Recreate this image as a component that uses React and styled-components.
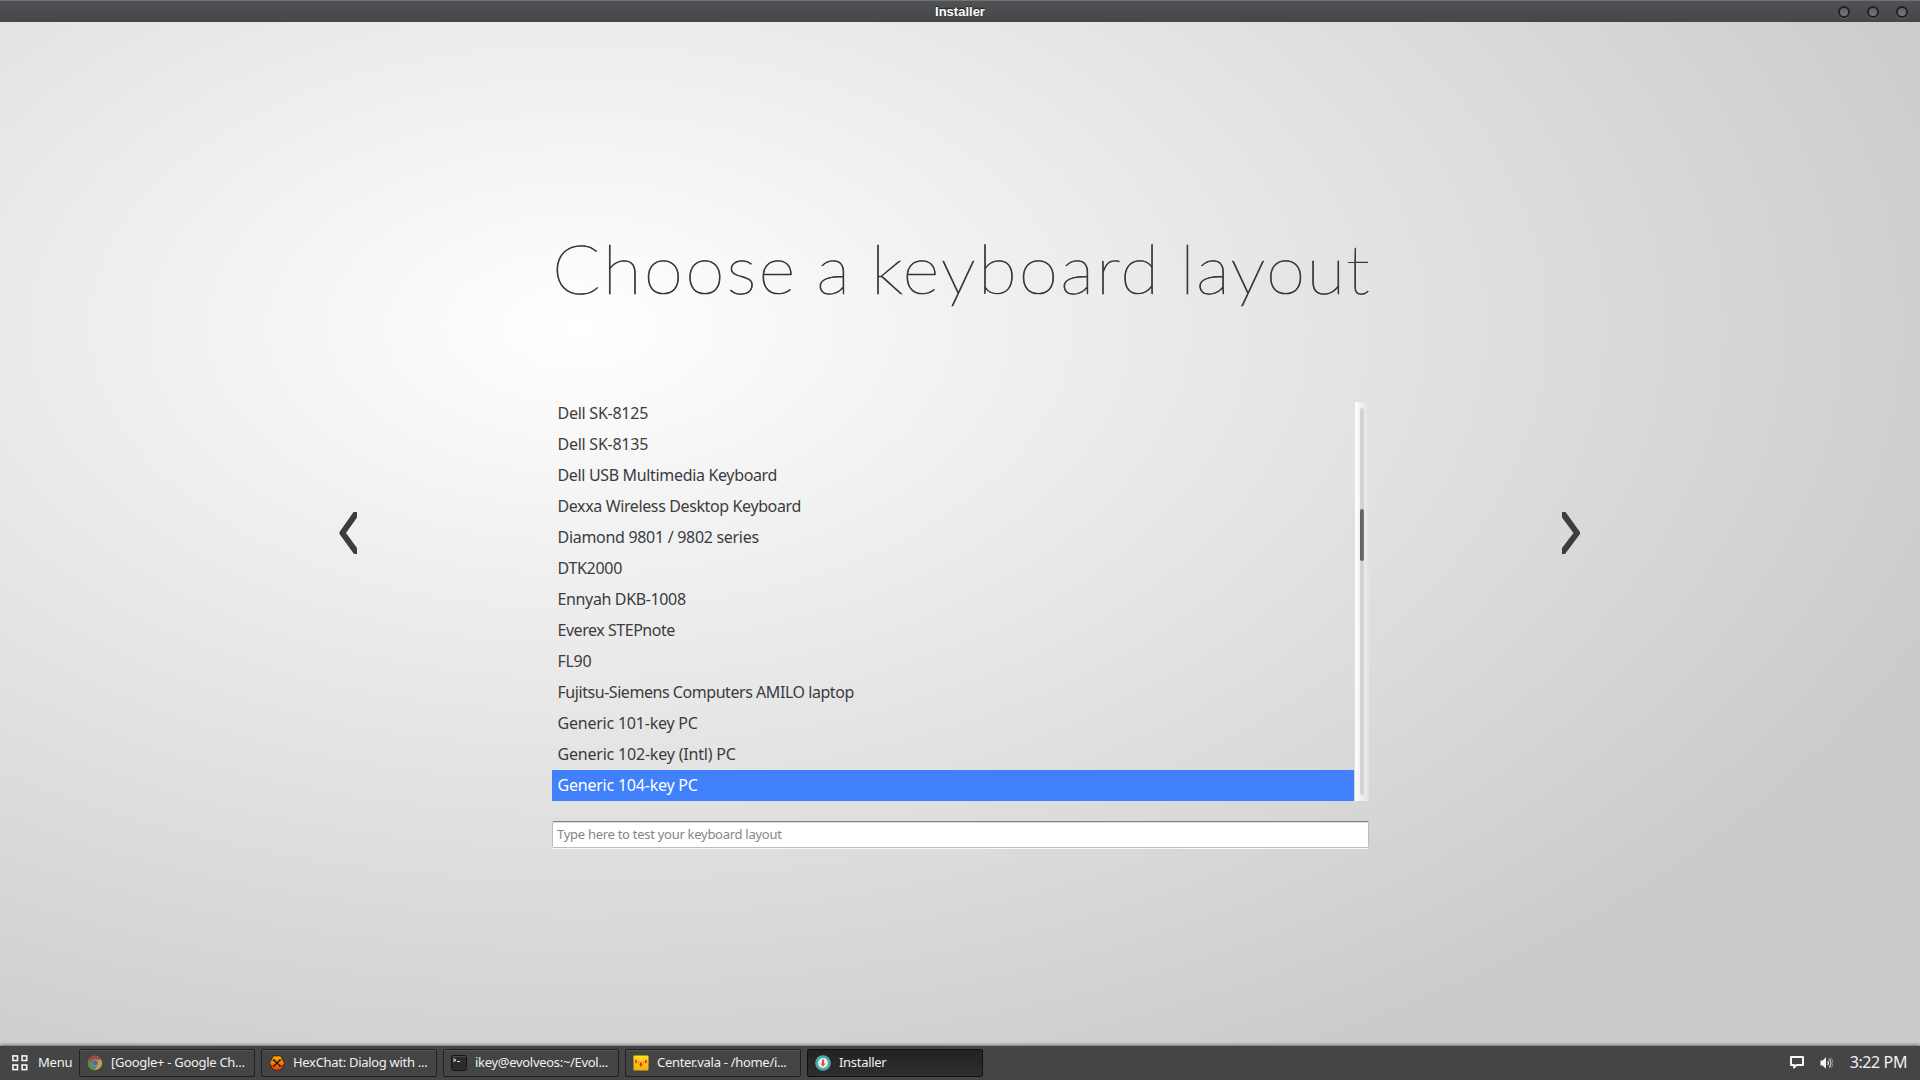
import styled, { createGlobalStyle, css } from "styled-components";

const App = () => {
  return (
    <Desktop>
      <GlobalStyle />
      <TitleBar>
        <WindowTitle>Installer</WindowTitle>
        <WindowButtons>
          <WindowButton aria-label="Minimize" />
          <WindowButton aria-label="Maximize" />
          <WindowButton aria-label="Close" />
        </WindowButtons>
      </TitleBar>

      <Content>
        <ArrowButton aria-label="Back">
          <svg width="18" height="42" viewBox="0 0 18 42">
            <path d="M14.5 0H18V5.5L7 21L18 36V42H15L0.5 22V20Z" fill="#3d3d3d" />
          </svg>
        </ArrowButton>

        <Page>
          <Heading>
            Choose a keyboard <span>layout</span>
          </Heading>
          <ListBox>
            <List>
              {keyboards.map(({ name, spacing }) => (
                <Row
                  key={name}
                  $spacing={spacing}
                  $selected={name === "Generic 104-key PC"}
                >
                  {name}
                </Row>
              ))}
            </List>
            <Scrollbar>
              <Trough>
                <Thumb />
              </Trough>
            </Scrollbar>
          </ListBox>
          <TestInput placeholder="Type here to test your keyboard layout" />
        </Page>

        <ArrowButton aria-label="Next">
          <svg width="18" height="42" viewBox="0 0 18 42">
            <path d="M3.5 0H0V5.5L11.5 21L0 36V42H3L18 22V20Z" fill="#3d3d3d" />
          </svg>
        </ArrowButton>
      </Content>

      <Panel>
        <MenuButton>
          <MenuIcon />
          <span>Menu</span>
        </MenuButton>
        <Tasks>
          {tasks.map(({ title, icon, active }) => (
            <Task key={title} $active={active}>
              {icon}
              <span>{title}</span>
            </Task>
          ))}
        </Tasks>
        <Tray>
          <MessageIcon />
          <VolumeIcon />
          <Clock>3:22 PM</Clock>
        </Tray>
      </Panel>
    </Desktop>
  );
};

export default App;

const MenuIcon = () => (
  <svg width="16" height="16" viewBox="0 0 16 16" fill="none" stroke="#f2f2f2" strokeWidth="1.6">
    <rect x="0.9" y="0.9" width="4.6" height="4.6" />
    <rect x="10.1" y="0.9" width="4.6" height="4.6" />
    <rect x="0.9" y="10" width="4.6" height="4.6" />
    <rect x="10.1" y="10" width="4.6" height="4.6" />
  </svg>
);

const ChromeIcon = () => (
  <svg width="16" height="16" viewBox="0 0 16 16">
    <circle cx="8" cy="8" r="7.2" fill="#c4a04a" />
    <path d="M1.6 4.6A7.2 7.2 0 0 1 14.4 4.7H8A3.4 3.4 0 0 0 4.9 9.4Z" fill="#a6483f" />
    <path d="M1.6 4.6A7.2 7.2 0 0 0 7.6 15.2L10.8 9.8A3.4 3.4 0 0 1 4.9 9.4Z" fill="#5a8a4c" />
    <circle cx="8" cy="8" r="3.4" fill="#8f9aa5" />
    <circle cx="8" cy="8" r="2.7" fill="#47719f" />
  </svg>
);

const HexChatIcon = () => (
  <svg width="16" height="16" viewBox="0 0 16 16">
    <defs>
      <linearGradient id="hex" x1="0" y1="0" x2="0" y2="1">
        <stop offset="0" stopColor="#ffb400" />
        <stop offset="1" stopColor="#f83c10" />
      </linearGradient>
    </defs>
    <path d="M4.4 1h7.2L15.5 8l-3.9 7H4.4L0.5 8Z" fill="url(#hex)" stroke="#2a1a0c" strokeWidth="0.7" />
    <path d="M4.6 4.8L11.4 11.2M11.4 4.8L4.6 11.2" stroke="#2a1608" strokeWidth="1.5" />
    <path d="M3.6 5.4L5.6 4.4M12.4 5.4L10.4 4.4M3.6 10.6l2 1M12.4 10.6l-2 1" stroke="#2a1608" strokeWidth="0.9" />
  </svg>
);

const TerminalIcon = () => (
  <svg width="16" height="16" viewBox="0 0 16 16">
    <rect x="0.5" y="0.5" width="15" height="15" rx="2" fill="#2b2b2b" stroke="#151515" />
    <path d="M1.5 1.5h13" stroke="#4c4c4c" />
    <path d="M3 3.3V7M3.4 4.2L5 5.2L3.4 6.2M6 6.5h3" fill="none" stroke="#e4e4e4" />
  </svg>
);

const EditorIcon = () => (
  <svg width="16" height="16" viewBox="0 0 16 16">
    <defs>
      <linearGradient id="editor" x1="0" y1="0" x2="0" y2="1">
        <stop offset="0" stopColor="#ffe01c" />
        <stop offset="1" stopColor="#f2ae16" />
      </linearGradient>
    </defs>
    <rect x="0.5" y="0.5" width="15" height="15" rx="1" fill="url(#editor)" />
    <path d="M3 4L4.2 6.5L3 9L1.8 6.5ZM13 4l1.2 2.5L13 9l-1.2-2.5ZM8 6.8l1.6 2.7L8 12.2L6.4 9.5Z" fill="#e0301e" />
    <path d="M5 7.2h1M10 7.2h1" stroke="#e0301e" />
  </svg>
);

const InstallerIcon = () => (
  <svg width="16" height="16" viewBox="0 0 16 16">
    <circle cx="8" cy="8" r="7.8" fill="#45aea8" />
    <circle cx="8" cy="8" r="4.9" fill="#f1ece6" />
    <path d="M7 4.6h2v4h1.6L8 11.5L5.4 8.6H7Z" fill="#dd4f43" />
  </svg>
);

const MessageIcon = () => (
  <svg width="14" height="14" viewBox="0 0 14 14">
    <path d="M1 1H13V9H6.4L4 11.6V9H1Z" fill="none" stroke="#f5f5f5" strokeWidth="2" strokeLinejoin="round" />
  </svg>
);

const VolumeIcon = () => (
  <svg width="13" height="14" viewBox="0 0 13 14">
    <path d="M0.5 4.5H2.6L6 1.2V12.8L2.6 9.5H0.5Z" fill="#f5f5f5" />
    <path d="M7.6 5A3 3 0 0 1 7.6 9" fill="none" stroke="#f5f5f5" strokeWidth="1.1" />
    <path d="M9 2.8A5.4 5.4 0 0 1 9 11.2" fill="none" stroke="#d5d5d5" strokeWidth="1.1" />
    <path d="M10.5 1.6A7 7 0 0 1 10.5 12.4" fill="none" stroke="#999" strokeWidth="0.9" />
  </svg>
);

const keyboards = [
  { name: "Dell SK-8125", spacing: -0.25 },
  { name: "Dell SK-8135", spacing: -0.25 },
  { name: "Dell USB Multimedia Keyboard", spacing: -0.34 },
  { name: "Dexxa Wireless Desktop Keyboard", spacing: -0.38 },
  { name: "Diamond 9801 / 9802 series", spacing: -0.3 },
  { name: "DTK2000", spacing: -0.3 },
  { name: "Ennyah DKB-1008", spacing: -0.36 },
  { name: "Everex STEPnote", spacing: -0.46 },
  { name: "FL90", spacing: -0.3 },
  { name: "Fujitsu-Siemens Computers AMILO laptop", spacing: -0.45 },
  { name: "Generic 101-key PC", spacing: -0.22 },
  { name: "Generic 102-key (Intl) PC", spacing: -0.2 },
  { name: "Generic 104-key PC", spacing: -0.22 },
];

const tasks = [
  { title: "[Google+ - Google Ch...", icon: <ChromeIcon /> },
  { title: "HexChat: Dialog with ...", icon: <HexChatIcon /> },
  { title: "ikey@evolveos:~/Evol...", icon: <TerminalIcon /> },
  { title: "Center.vala - /home/i...", icon: <EditorIcon /> },
  { title: "Installer", icon: <InstallerIcon />, active: true },
];

const GlobalStyle = createGlobalStyle`
  * {
    box-sizing: border-box;
  }

  body {
    margin: 0;
    overflow: hidden;
    font-family: "Noto Sans", sans-serif;
  }

  button {
    padding: 0;
    border: 0;
    background: none;
    font: inherit;
  }

  svg {
    display: block;
    flex: none;
  }
`;

const Desktop = styled.div`
  display: flex;
  flex-direction: column;
  width: 1920px;
  height: 1080px;
`;

const TitleBar = styled.header`
  display: grid;
  grid-template-columns: 1fr auto 1fr;
  align-items: center;
  height: 22px;
  border-top: 1px solid #70727b;
  background: linear-gradient(#515254, #454648);
`;

const WindowTitle = styled.div`
  grid-column: 2;
  font: bold 13px/20px "Liberation Sans", sans-serif;
  color: #fff;
  text-shadow: 0 -1px 1px #1c1c1c;
`;

const WindowButtons = styled.div`
  display: flex;
  justify-content: flex-end;
  gap: 17px;
  padding-right: 12px;
`;

const WindowButton = styled.button`
  width: 12px;
  height: 12px;
  border: 2px solid #202224;
  border-radius: 50%;
  background: linear-gradient(#5c5e60, #77797c);
  box-shadow: 0 1px 0 #65676a;
`;

const Content = styled.main`
  flex: 1;
  display: flex;
  justify-content: center;
  padding-right: 1px;
  background: radial-gradient(1480px 850px at 580px 305px, #fff, #cacaca);
`;

const ArrowButton = styled.button`
  align-self: flex-start;
  margin-top: 490px;
  width: 18px;
  height: 42px;
`;

const Page = styled.section`
  display: flex;
  flex-direction: column;
  width: 817px;
  margin: 0 193px 0 195px;
`;

const Heading = styled.h1`
  margin: 199px 0 0;
  height: 181px;
  font-family: Lato, sans-serif;
  font-size: 68px;
  font-weight: 100;
  line-height: 94px;
  letter-spacing: 2px;
  word-spacing: -3.5px;
  white-space: nowrap;
  color: #34353c;
  -webkit-text-stroke: 0.7px #34353c;
  transform: scaleX(1.05);
  transform-origin: left;

  span {
    letter-spacing: 1.1px;
  }
`;

const ListBox = styled.div`
  display: flex;
  justify-content: space-between;
  height: 399px;
`;

const List = styled.ul`
  display: flex;
  flex-direction: column;
  justify-content: flex-end;
  width: 802px;
  margin: 0;
  padding: 0;
  overflow: hidden;
  list-style: none;
`;

const Row = styled.li`
  flex: none;
  height: 31px;
  padding-left: 5.5px;
  font-size: 16px;
  line-height: 30px;
  letter-spacing: ${({ $spacing }) => $spacing}px;
  color: ${({ $selected }) => ($selected ? "#fff" : "#3a3c3e")};
  background: ${({ $selected }) => ($selected ? "#4080fb" : "none")};
`;

const Scrollbar = styled.div`
  width: 14px;
  padding: 6px 5px;
  background: linear-gradient(to right, #fff, #f0f0f1 40%, #e2e2e4);
`;

const Trough = styled.div`
  width: 4px;
  height: 387px;
  padding-top: 101px;
  border-radius: 2px;
  background: #d3d3d4;
`;

const Thumb = styled.div`
  height: 52px;
  border-radius: 2px;
  background: linear-gradient(to right, #5c5c5c, #757575);
`;

const TestInput = styled.input`
  height: 27px;
  margin-top: 20px;
  padding: 0 4px 1px;
  border: 1px solid #bdbdbd;
  border-top: 1px solid #828282;
  border-radius: 2px;
  background: #fff;
  box-shadow: inset 0 1px 0 #ddd, 0 1px 0 #f8f8f8;
  outline: none;
  font: 13px "Noto Sans", sans-serif;
  letter-spacing: -0.28px;

  &::placeholder {
    color: #858585;
    opacity: 1;
  }
`;

const Panel = styled.footer`
  position: relative;
  display: flex;
  align-items: flex-start;
  height: 34px;
  padding-top: 3px;
  background: #454545;
  box-shadow: 0 -1px 3px rgba(0, 0, 0, 0.5);
`;

const MenuButton = styled.button`
  display: flex;
  align-items: center;
  gap: 10px;
  width: 79px;
  height: 28px;
  padding-left: 12px;
  font-size: 13px;
  line-height: 18px;
  letter-spacing: -0.2px;
  color: #f2f2f2;

  span {
    padding-bottom: 2px;
  }
`;

const Tasks = styled.nav`
  display: flex;
  gap: 6px;
`;

const Task = styled.button`
  display: flex;
  align-items: center;
  gap: 8px;
  width: 176px;
  height: 28px;
  padding-left: 7px;
  border: 1px solid #202020;
  border-radius: 2px;
  background: #444;
  box-shadow: inset 0 1px 0 #555;
  font-size: 13px;
  line-height: 18px;
  letter-spacing: -0.3px;
  white-space: nowrap;
  color: #f0f0f0;

  span {
    padding-bottom: 2px;
  }

  ${({ $active }) =>
    $active &&
    css`
      border-color: #101010;
      background: linear-gradient(#222, #2e2e2e);
      box-shadow: none;
    `}
`;

const Tray = styled.div`
  display: flex;
  align-items: center;
  gap: 16px;
  height: 28px;
  margin-left: auto;
  padding-right: 13px;
`;

const Clock = styled.time`
  padding-bottom: 2px;
  margin-left: 1px;
  font-size: 16px;
  letter-spacing: -0.4px;
  color: #f2f2f2;
`;
